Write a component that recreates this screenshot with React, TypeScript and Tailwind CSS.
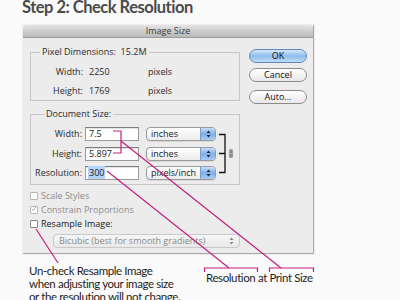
import React from "react";

const ui = { fontFamily: '"Open Sans", "DejaVu Sans", sans-serif' };
const myriad = { fontFamily: 'Lato, "Open Sans", sans-serif' };

function Stepper({ blue = true }: { blue?: boolean }) {
  return (
    <div
      className={
        blue
          ? "w-[15px] h-full rounded-r-[4px] bg-gradient-to-b from-[#c9defa] via-[#7eaee8] to-[#a9cdf5] border-l border-[#7a9cc8] flex items-center justify-center"
          : "w-[15px] h-full rounded-r-[4px] flex items-center justify-center"
      }
    >
      <svg width="5" height="8" viewBox="0 0 5 8">
        <path d="M2.5 0.5 L4.5 3 L0.5 3 Z" fill={blue ? "#1d2a3a" : "#888"} />
        <path d="M2.5 7.5 L4.5 5 L0.5 5 Z" fill={blue ? "#1d2a3a" : "#888"} />
      </svg>
    </div>
  );
}

function Select({ label }: { label: string }) {
  return (
    <div className="w-[70px] h-[14px] rounded-[4px] border border-[#9a9a9a] bg-gradient-to-b from-white to-[#ececec] flex items-stretch shadow-[0_1px_0_rgba(0,0,0,0.08)]">
      <div className="flex-1 pl-[4px] text-[9px] leading-[12px] text-[#1a1a1a]">{label}</div>
      <Stepper />
    </div>
  );
}

function Input({ value, selected = false }: { value: string; selected?: boolean }) {
  return (
    <div className="w-[54px] h-[14px] border border-[#9b9b9b] border-t-[#7d7d7d] bg-white pl-[2px] text-[9px] leading-[12px] text-[#1a1a1a] shadow-[inset_0_1px_1px_rgba(0,0,0,0.12)]">
      {selected ? <span className="bg-[#b5d3f8] px-[1px]">{value}</span> : <span className="pl-[1px]">{value}</span>}
    </div>
  );
}

function CheckRow({ label, checked = false, disabled = false }: { label: string; checked?: boolean; disabled?: boolean }) {
  return (
    <div className="h-[14px] flex items-center">
      <div
        className={
          "w-[8px] h-[8px] border rounded-[1px] bg-white flex items-center justify-center " +
          (disabled ? "border-[#b8b8b8]" : "border-[#8a8a8a]")
        }
      >
        {checked && (
          <svg width="9" height="9" viewBox="0 0 9 9" className="mt-[-3px]">
            <path d="M1.5 5 L3.5 7.5 L8 0.5" stroke="#9a9a9a" strokeWidth="1.3" fill="none" />
          </svg>
        )}
      </div>
      <span className={"ml-[3px] text-[9px] leading-[12px] " + (disabled ? "text-[#8c8c8c]" : "text-[#1a1a1a]")}>{label}</span>
    </div>
  );
}

export default function App() {
  return (
    <div className="relative w-[400px] h-[300px] overflow-hidden bg-[#fafafa]">
      {/* Heading */}
      <div className="h-[25px] pl-[22px] text-[16.5px] leading-[14px] tracking-[-0.5px] font-bold text-[#4a4a4a] whitespace-nowrap" style={myriad}>
        Step 2: Check Resolution
      </div>

      {/* Dialog */}
      <div className="ml-[23px] w-[291px] h-[229px] flex flex-col border-r border-b border-[#a8a8a8] shadow-[0_0_2px_rgba(0,0,0,0.15)]" style={ui}>
        <div className="h-[13px] rounded-t-[3px] bg-gradient-to-b from-[#e4e4e4] to-[#b9b9b9] border-b border-[#9c9c9c] flex items-center justify-center text-[9px] leading-[12px] text-[#3c3c3c]">
          Image Size
        </div>
        <div className="flex-1 bg-[#ececec] flex">
          {/* Left column */}
          <div className="w-[217px] pl-[7px] pt-[14px] flex flex-col">
            {/* Pixel Dimensions */}
            <div className="relative h-[49px] border border-[#c6c6c6] flex flex-col">
              <div className="absolute left-[9px] top-[-7px] px-[2px] bg-[#ececec] text-[9px] leading-[12px] text-[#2a2a2a]">
                Pixel Dimensions:&nbsp; 15.2M
              </div>
              <div className="mt-[11px] h-[16px] flex items-center text-[9px] text-[#2a2a2a]">
                <span className="w-[52px] text-right">Width:</span>
                <span className="ml-[6px] w-[59px]">2250</span>
                <span>pixels</span>
              </div>
              <div className="mt-[3px] h-[16px] flex items-center text-[9px] text-[#2a2a2a]">
                <span className="w-[52px] text-right">Height:</span>
                <span className="ml-[6px] w-[59px]">1769</span>
                <span>pixels</span>
              </div>
            </div>

            {/* Document Size */}
            <div className="relative mt-[13px] h-[71px] border border-[#c6c6c6] flex flex-col">
              <div className="absolute left-[13px] top-[-7px] px-[2px] bg-[#ececec] text-[9px] leading-[12px] text-[#2a2a2a]">
                Document Size:
              </div>
              <div className="mt-[12px] h-[14px] flex items-center text-[9px] text-[#2a2a2a]">
                <span className="w-[51px] text-right">Width:</span>
                <div className="ml-[3px]"><Input value="7.5" /></div>
                <div className="ml-[7px]"><Select label="inches" /></div>
              </div>
              <div className="mt-[6px] h-[14px] flex items-center text-[9px] text-[#2a2a2a]">
                <span className="w-[51px] text-right">Height:</span>
                <div className="ml-[3px]"><Input value="5.897" /></div>
                <div className="ml-[7px]"><Select label="inches" /></div>
              </div>
              <div className="mt-[5px] h-[14px] flex items-center text-[9px] text-[#2a2a2a]">
                <span className="w-[51px] text-right">Resolution:</span>
                <div className="ml-[3px]"><Input value="300" selected /></div>
                <div className="ml-[7px]"><Select label="pixels/inch" /></div>
              </div>
            </div>

            {/* Checkboxes */}
            <div className="mt-[4px] pl-[0px] flex flex-col">
              <CheckRow label="Scale Styles" disabled />
              <CheckRow label="Constrain Proportions" checked disabled />
              <CheckRow label="Resample Image:" />
            </div>
            <div className="mt-[3px] ml-[23px] w-[187px] h-[14px] rounded-[4px] border border-[#c9c9c9] bg-gradient-to-b from-[#f7f7f7] to-[#e9e9e9] flex items-stretch">
              <div className="flex-1 pl-[5px] text-[9px] leading-[12px] text-[#8a8a8a]">Bicubic (best for smooth gradients)</div>
              <Stepper blue={false} />
            </div>
          </div>

          {/* Right column: buttons */}
          <div className="ml-[9px] pt-[11px] flex flex-col">
            <div className="w-[58px] h-[14px] rounded-full border border-[#5f86bd] bg-gradient-to-b from-[#d8e8fa] via-[#8ebcec] to-[#c2ddf8] flex items-center justify-center text-[9px] leading-[12px] text-[#111]">
              OK
            </div>
            <div className="mt-[5px] w-[58px] h-[14px] rounded-full border border-[#8b8b8b] bg-gradient-to-b from-white to-[#e8e8e8] flex items-center justify-center text-[9px] leading-[12px] text-[#111]">
              Cancel
            </div>
            <div className="mt-[8px] w-[58px] h-[14px] rounded-full border border-[#8b8b8b] bg-gradient-to-b from-white to-[#e8e8e8] flex items-center justify-center text-[9px] leading-[12px] text-[#111]">
              Auto...
            </div>
          </div>
        </div>
      </div>

      {/* Captions */}
      <div className="flex text-[#1e1e1e]" style={myriad}>
        <div className="w-[206px] pl-[29px] pt-[10px] text-[11.5px] leading-[13px] tracking-[-0.4px] whitespace-nowrap">
          Un-check Resample Image
          <br />
          when adjusting your image size
          <br />
          or the resolution will not change.
        </div>
        <div className="pt-[17px] text-[11.5px] leading-[13px] tracking-[-0.4px] whitespace-nowrap">Resolution at Print Size</div>
      </div>

      {/* Overlay drawings: link bracket, chain icon, annotation lines */}
      <svg className="absolute inset-0 pointer-events-none" width="400" height="300" viewBox="0 0 400 300">
        {/* constrain bracket */}
        <path d="M219 134.5 H225 V172.5 H219 M219 153.5 H225" stroke="#111" strokeWidth="1.3" fill="none" />
        {/* chain */}
        <rect x="229" y="149" width="4" height="9" rx="1.5" fill="#9a9a9a" />
        <line x1="229.5" y1="153.5" x2="232.5" y2="153.5" stroke="#d8d8d8" strokeWidth="0.8" />
        <line x1="231" y1="150.5" x2="231" y2="156.5" stroke="#6f6f6f" strokeWidth="0.6" />
        {/* pink annotations */}
        <g stroke="#c4207f" strokeWidth="1.2" fill="none">
          <path d="M113 131 H121 V153 H113" />
          <line x1="121" y1="141" x2="281" y2="268" />
          <line x1="107" y1="171" x2="229" y2="268" />
          <line x1="36" y1="229" x2="58" y2="263" />
          <path d="M204.5 272 V268 H257.5 V272" />
          <path d="M269.5 272 V268 H313.5 V272" />
        </g>
      </svg>
    </div>
  );
}
